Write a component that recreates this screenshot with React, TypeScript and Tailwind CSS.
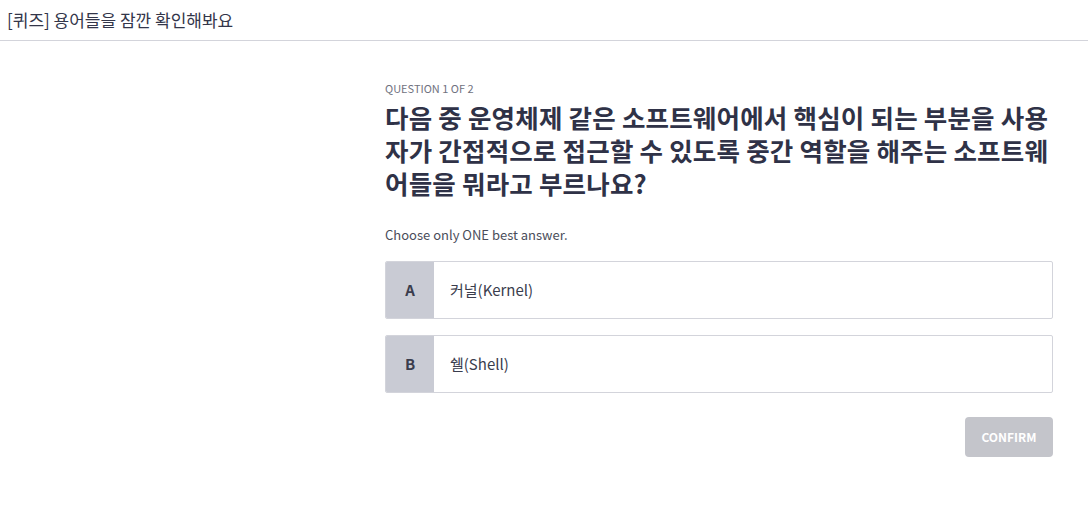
const options = [
  { key: 'A', label: '커널(Kernel)' },
  { key: 'B', label: '쉘(Shell)' },
]

const App = () => {
  return (
    <div className="min-h-screen bg-white font-['Noto_Sans_CJK_KR',sans-serif] text-[#3a3d4d]">
      <header className="h-[41px] border-b border-[#d3d4db] flex items-center px-[7px]">
        <h1 className="text-[17px] text-[#33364a]">[퀴즈] 용어들을 잠깐 확인해봐요</h1>
      </header>
      <main className="flex">
        <div className="w-[385px] shrink-0"></div>
        <section className="w-[668px] pt-[40px]">
          <p className="text-[11px] leading-[14px] text-[#6f7280]">QUESTION 1 OF 2</p>
          <h2 className="mt-[5px] text-[25.5px] leading-[33px] font-bold text-[#2f3247] tracking-[0.2px]">
            다음 중 운영체제 같은 소프트웨어에서 핵심이 되는 부분을 사용자가 간접적으로 접근할 수 있도록 중간 역할을 해주는 소프트웨어들을 뭐라고 부르나요?
          </h2>
          <p className="mt-[27px] text-[13px] leading-[18px] text-[#4a4d5a]">Choose only ONE best answer.</p>
          <div className="mt-[17px] flex flex-col gap-[16px]">
            {options.map((o) => (
              <button
                key={o.key}
                className="flex h-[58px] w-full border border-[#d3d4db] rounded-[2px] overflow-hidden text-left bg-white"
              >
                <span className="w-[48px] shrink-0 bg-[#c9cbd4] flex items-center justify-center text-[15px] font-bold text-[#3a3d4d]">
                  {o.key}
                </span>
                <span className="flex items-center pl-[16px] text-[15px] text-[#3a3d4d]">{o.label}</span>
              </button>
            ))}
          </div>
          <div className="mt-[24px] flex justify-end">
            <button className="w-[88px] h-[40px] rounded-[4px] bg-[#c4c5cb] text-white text-[12px] font-bold">
              CONFIRM
            </button>
          </div>
        </section>
      </main>
    </div>
  )
}

export default App
